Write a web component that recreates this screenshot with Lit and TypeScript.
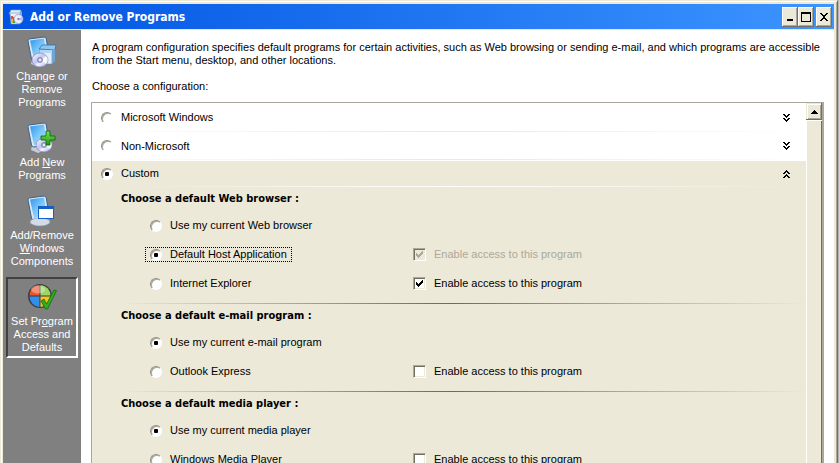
import { LitElement, html, css, nothing, svg } from "lit";
import { customElement, property, state } from "lit/decorators.js";
import { classMap } from "lit/directives/class-map.js";

type Option = { label: string; access?: "on" | "off" | "locked" };
type Group = { id: string; title: string; selected: number; options: Option[] };

const GROUPS: Group[] = [
  {
    id: "browser",
    title: "Choose a default Web browser :",
    selected: 1,
    options: [
      { label: "Use my current Web browser" },
      { label: "Default Host Application", access: "locked" },
      { label: "Internet Explorer", access: "on" },
    ],
  },
  {
    id: "email",
    title: "Choose a default e-mail program :",
    selected: 0,
    options: [{ label: "Use my current e-mail program" }, { label: "Outlook Express", access: "off" }],
  },
  {
    id: "media",
    title: "Choose a default media player :",
    selected: 0,
    options: [{ label: "Use my current media player" }, { label: "Windows Media Player", access: "off" }],
  },
];

const gradients = svg`
  <defs>
    <linearGradient id="screen" x1="0" y1="0" x2="1" y2="1">
      <stop offset="0" stop-color="#2f95ea" /><stop offset=".5" stop-color="#7cc8fa" /><stop offset="1" stop-color="#b9e4fd" />
    </linearGradient>
    <linearGradient id="disc" x1="0" y1="0" x2="1" y2="1">
      <stop offset="0" stop-color="#ffffff" /><stop offset=".45" stop-color="#c0c4f0" />
      <stop offset=".6" stop-color="#f4f4ff" /><stop offset="1" stop-color="#9fa4d8" />
    </linearGradient>
    <linearGradient id="plus" x1="0" y1="0" x2="0" y2="1">
      <stop offset="0" stop-color="#7fe05a" /><stop offset="1" stop-color="#1c9a12" />
    </linearGradient>
  </defs>`;

const monitor = svg`
  <path d="M6 24 L19 21 L24 26 L12 31 L5 28 Z" fill="#c3ccd8" />
  <path d="M3 3 L18 1 Q20 1 20.300 3 L23 20 Q23 22 21 22.500 L8 25 Q6 25 5.500 23 L2 5 Q2 3.500 3 3 Z" fill="#dbe9f6" stroke="#3f6188" stroke-width="1" />
  <path d="M4 4.500 L18 2.500 L21 20 L8 23 Z" fill="url(#screen)" />`;

const disc = (x: number, y: number) => svg`
  <ellipse cx=${x} cy=${y} rx="8" ry="7" fill="url(#disc)" stroke="#8085b5" stroke-width=".7" />
  <path d="M${x} ${y} L${x + 7} ${y - 3} A8 7 0 0 1 ${x + 6} ${y + 4} Z" fill="#fff" opacity=".7" />
  <circle cx=${x} cy=${y} r="2.600" fill="#a9addc" stroke="#6b70a4" stroke-width=".6" />
  <circle cx=${x} cy=${y} r="1" fill="#fff" />`;

const box = svg`
  <path d="M13 13 L16 9 L30 9 L29 14 Z" fill="#8cc8f4" stroke="#2f6ea8" stroke-width=".8" />
  <path d="M14 14 L26 14 L26 28 L14 28 Z" fill="#e2eefa" stroke="#5e86b0" stroke-width=".6" />
  <path d="M26 14 L29 12 L29 25 L26 28 Z" fill="#6fa4d6" />
  <path d="M14 14 L26 14 L26 17 L14 17 Z" fill="#b5d6f2" />`;

const icon = (body: unknown) => html`<svg class="icon" viewBox="0 0 32 32" aria-hidden="true">${gradients}${body}</svg>`;

const changeIcon = icon(svg`${monitor}${box}${disc(14, 24)}`);
const addIcon = icon(svg`${monitor}${disc(18, 23)}
  <path d="M20 9 h4 v5 h5 v4 h-5 v5 h-4 v-5 h-5 v-4 h5 Z" fill="url(#plus)" stroke="#0d6e0a" stroke-width=".9" />`);
const componentsIcon = icon(svg`${monitor}
  <ellipse cx="14" cy="27" rx="10" ry="4" fill="#d3dbe6" stroke="#8695a8" stroke-width=".6" />
  <rect x="12.500" y="11.500" width="15" height="12" fill="#fff" stroke="#1460c8" />
  <rect x="12" y="11" width="16" height="3" fill="#1460c8" />`);
const defaultsIcon = icon(svg`
  <circle cx="14" cy="15" r="12" fill="#3b3b3b" />
  <path d="M13.500 14.500 V4 A10.500 10.500 0 0 0 3.500 14.500 Z" fill="#f0532b" />
  <path d="M14.500 14.500 V4 A10.500 10.500 0 0 1 24.500 14.500 Z" fill="#9bd667" />
  <path d="M13.500 15.500 V26 A10.500 10.500 0 0 1 3.500 15.500 Z" fill="#2f8fee" />
  <path d="M14.500 15.500 V26 A10.500 10.500 0 0 0 24.500 15.500 Z" fill="#f7c51c" />
  <ellipse cx="12" cy="8.500" rx="7" ry="4" fill="#fff" opacity=".35" />
  <path d="M15 20 L18 18 L20.500 23 L28 9 L30.500 9.500 L21.500 28 L19.500 28 Z" fill="#32ad22" stroke="#0c6b0c" stroke-width=".8" />`);

const appIcon = html`<svg class="app-icon" viewBox="0 0 16 16" aria-hidden="true">
  <path d="M1 5 L3 1 L13 1 L12 5 Z" fill="#dce9f6" stroke="#7fa3cc" stroke-width=".6" />
  <path d="M2 4 H12 V15 H3 Z" fill="#e9f0f8" stroke="#6f93bd" stroke-width=".6" />
  <path d="M12 4 L14 2 V12 L12 14 Z" fill="#86a9cf" />
  <rect x="3" y="7" width="2" height="3" fill="#e2522a" /><rect x="3" y="10" width="2" height="4" fill="#eab829" />
  <rect x="5" y="8" width="2" height="6" fill="#37a43c" />
  <circle cx="10.500" cy="10" r="4.500" fill="#eeeffc" stroke="#8a90c4" stroke-width=".7" />
  <path d="M10.500 10 L14 8 A4 4 0 0 1 14 12 Z" fill="#b9bdec" />
  <circle cx="10.500" cy="10" r="1.300" fill="#8a8fc0" />
</svg>`;

@customElement("double-chevron")
export class DoubleChevron extends LitElement {
  @property({ type: Boolean }) up = false;
  static styles = css`
    :host { display: block; width: 7px; height: 8px; }
    .glyph { display: block; }
    .up { transform: scaleY(-1); }
  `;
  render() {
    const v = (y: number) => `M0 ${y}h2v1h1v1h1v-1h1v-1h2v1h-1v1h-1v1h-1v1h-1v-1h-1v-1h-1v-1h-1z`;
    return html`<svg class=${classMap({ glyph: true, up: this.up })} width="7" height="8" viewBox="0 0 7 8" shape-rendering="crispEdges">
      <path d="${v(0)}${v(4)}" />
    </svg>`;
  }
}

@customElement("app-root")
export class AppRoot extends LitElement {
  @state() private config = "custom";

  static styles = css`
    :host {
      display: block;
      height: 100vh;
      overflow: hidden;
      background: #b4b4b8;
      padding-right: 1px;
      box-sizing: border-box;
      font: 11px/13px "Liberation Sans", Arial, sans-serif;
      color: #000;
      --face: #ece9d8;
      --shade: #aca899;
      --dark: #716f64;
    }
    * { box-sizing: border-box; }
    button { font: inherit; color: inherit; margin: 0; padding: 0; border: 0; border-radius: 0; }
    .window {
      display: flex;
      flex-direction: column;
      height: 100%;
      padding: 3px 3px 0 2px;
      background: var(--face);
      border: solid var(--face);
      border-width: 1px 1px 0 1px;
      border-right-color: var(--dark);
      box-shadow: inset 1px 1px #fff, inset -1px 0 var(--shade);
    }
    .titlebar {
      display: flex;
      align-items: center;
      flex: none;
      height: 25px;
      padding: 0 2px 0 5px;
      background: linear-gradient(90deg, #0054e3, #3d95ff);
      color: #fff;
    }
    .app-icon { width: 16px; height: 16px; margin-right: 6px; }
    .title { flex: 1; margin: 0; font: bold 12px/16px "DejaVu Sans Condensed", "DejaVu Sans", sans-serif; }
    .caption {
      display: grid;
      place-items: center;
      width: 16px;
      height: 20px;
      background: var(--face);
      color: #000;
      box-shadow: inset -1px -1px var(--dark), inset 1px 1px #fff, inset -2px -2px var(--shade);
    }
    .caption.close { margin-left: 2px; }
    .body { display: flex; flex: 1; min-height: 0; margin-top: 1px; background: #fff; }

    .sidebar {
      display: flex;
      flex-direction: column;
      flex: none;
      gap: 5px;
      width: 78px;
      padding: 2px 3px;
      background: #808080;
    }
    .task {
      display: flex;
      flex-direction: column;
      align-items: center;
      gap: 2px;
      padding: 2px 0;
      border: 2px solid transparent;
      background: none;
      color: #fff;
      white-space: nowrap;
    }
    .task.current { border-color: #404040 #fff #fff #404040; }
    .icon { width: 32px; height: 32px; }
    .mnemonic { text-decoration: underline; }

    .content { display: flex; flex-direction: column; flex: 1; min-width: 0; padding: 11px 10px 0 10px; }
    .intro, .prompt { margin: 0; padding-left: 1px; }
    .prompt { margin-top: 13px; }
    .list {
      display: flex;
      flex: 1;
      min-height: 0;
      margin-top: 9px;
      border: solid var(--shade);
      border-width: 1px 2px 0 1px;
      overflow: hidden;
    }
    .rows { flex: 1; min-width: 0; }
    .config {
      display: flex;
      align-items: center;
      height: 28px;
      padding: 0 16px 0 9px;
      background: linear-gradient(90deg, transparent, #ece9d8 50%, transparent) bottom / 100% 1px no-repeat;
    }
    .config label { display: flex; align-items: center; flex: 1; }
    .config input { margin-right: 8px; }
    .config.first { height: 29px; }
    .config.open { height: 25px; background: none; }
    .expanded { margin-top: 1px; background: var(--face); height: 100%; }
    .group {
      margin: 0;
      padding: 0 0 5px;
      border: 0;
      background: linear-gradient(90deg, transparent 4%, #2f72dc 50%, transparent) top / 100% 1px no-repeat;
    }
    .group.lead { background-image: linear-gradient(90deg, transparent 4%, #fff 50%, transparent); }
    .heading {
      margin: 0;
      padding: 6px 0 6px 29px;
      font: bold 11px/13px "DejaVu Sans Condensed", "DejaVu Sans", sans-serif;
    }
    .option {
      display: grid;
      grid-template-columns: 268px 1fr;
      align-items: center;
      height: 29px;
      padding-left: 53px;
    }
    .choice, .access { display: flex; align-items: center; }
    .choice { justify-self: start; gap: 8px; height: 15px; padding: 0 4px; border: 1px dotted transparent; }
    .choice.focused { border-color: #000; }
    .access { gap: 8px; }
    .access.locked { color: var(--shade); }

    input { appearance: none; flex: none; margin: 0; }
    input[type="radio"] {
      display: grid;
      place-items: center;
      width: 12px;
      height: 12px;
      border: 1px solid;
      border-color: #8f8c7e #fff #fff #8f8c7e;
      border-radius: 50%;
      background: #fff;
      box-shadow: inset 1px 1px #aca899;
    }
    input[type="radio"]:checked::before { content: ""; width: 4px; height: 4px; border-radius: 1px; background: #000; }
    .tick { display: grid; flex: none; width: 13px; height: 13px; }
    .tick > * { grid-area: 1 / 1; }
    input[type="checkbox"] {
      width: 13px;
      height: 13px;
      border: 1px solid;
      border-color: var(--shade) #fff #fff var(--shade);
      background: #fff;
      box-shadow: inset 1px 1px var(--dark), inset -1px -1px var(--face);
    }
    input[type="checkbox"]:disabled { background: var(--face); }
    .mark { visibility: hidden; pointer-events: none; fill: currentColor; }
    input:checked + .mark { visibility: visible; }

    .scrollbar { flex: none; width: 16px; background: var(--face); box-shadow: inset 1px 0 #fff, inset -1px 0 var(--dark); }
    .arrow {
      display: grid;
      place-items: center;
      width: 16px;
      height: 17px;
      background: var(--face);
      box-shadow: inset -1px -1px var(--dark), inset 1px 1px var(--face), inset 2px 2px #fff, inset -2px -2px var(--shade);
    }
    .thumb { height: 100%; box-shadow: inset 1px 1px #fff, inset -1px 0 var(--dark); }
  `;

  private renderConfig(id: string, label: string, cls = "") {
    const open = id === "custom";
    return html`<div class=${classMap({ config: true, open, [cls || "closed"]: true })}>
      <label>
        <input type="radio" name="config" .checked=${this.config === id} @change=${() => (this.config = id)} />
        ${label}
      </label>
      <double-chevron ?up=${open}></double-chevron>
    </div>`;
  }

  private renderAccess(access: Option["access"]) {
    if (!access) return nothing;
    const locked = access === "locked";
    return html`<label class=${classMap({ access: true, locked })}>
      <span class="tick">
        <input type="checkbox" ?checked=${access !== "off"} ?disabled=${locked} />
        <svg class="mark" width="13" height="13" viewBox="0 0 13 13" shape-rendering="crispEdges">
          <path d="M3 5h1v1h1v1h1v-1h1v-1h1v-1h1v-1h1v3h-1v1h-1v1h-1v1h-1v1h-1v-1h-1v-1h-1z" />
        </svg>
      </span>
      Enable access to this program
    </label>`;
  }

  private renderGroup(group: Group, index: number) {
    return html`<div class=${classMap({ group: true, lead: index === 0 })} role="radiogroup" aria-labelledby=${group.id}>
      <h2 class="heading" id=${group.id}>${group.title}</h2>
      ${group.options.map(
        (option, i) => html`<div class="option">
          <label class=${classMap({ choice: true, focused: index === 0 && i === group.selected })}>
            <input type="radio" name=${group.id} ?checked=${i === group.selected} />
            ${option.label}
          </label>
          ${this.renderAccess(option.access)}
        </div>`
      )}
    </div>`;
  }

  render() {
    const key = (c: string) => html`<span class="mnemonic">${c}</span>`;
    return html`<div class="window">
      <header class="titlebar">
        ${appIcon}
        <h1 class="title">Add or Remove Programs</h1>
        <button class="caption" aria-label="Minimize">
          <svg width="10" height="10" shape-rendering="crispEdges"><path d="M2 7h6v2H2z" /></svg>
        </button>
        <button class="caption" aria-label="Maximize">
          <svg width="10" height="10" shape-rendering="crispEdges"><path fill-rule="evenodd" d="M0 0h10v10H0zM1 2h8v7H1z" /></svg>
        </button>
        <button class="caption close" aria-label="Close">
          <svg width="10" height="8" shape-rendering="crispEdges">
            <path d="M1 0h2v1h1v1h2v-1h1v-1h2v1h-1v1h-1v1h-1v2h1v1h1v1h1v1h-2v-1h-1v-1h-2v1h-1v1h-2v-1h1v-1h1v-1h1v-2h-1v-1h-1v-1h-1z" />
          </svg>
        </button>
      </header>
      <div class="body">
        <nav class="sidebar">
          <button class="task">${changeIcon}<span>C${key("h")}ange or<br />Remove<br />Programs</span></button>
          <button class="task">${addIcon}<span>Add ${key("N")}ew<br />Programs</span></button>
          <button class="task">${componentsIcon}<span>Add/Remove<br />${key("W")}indows<br />Components</span></button>
          <button class="task current">${defaultsIcon}<span>Set Pr${key("o")}gram<br />Access and<br />Defaults</span></button>
        </nav>
        <main class="content">
          <p class="intro">
            A program configuration specifies default programs for certain activities, such as Web browsing or sending
            e-mail, and which programs are accessible from the Start menu, desktop, and other locations.
          </p>
          <p class="prompt">Choose a configuration:</p>
          <div class="list">
            <div class="rows">
              ${this.renderConfig("microsoft", "Microsoft Windows", "first")}
              ${this.renderConfig("other", "Non-Microsoft")}
              <div class="expanded">${this.renderConfig("custom", "Custom")} ${GROUPS.map((g, i) => this.renderGroup(g, i))}</div>
            </div>
            <div class="scrollbar">
              <button class="arrow" aria-label="Scroll up">
                <svg width="7" height="4" shape-rendering="crispEdges"><path d="M3 0h1v1h1v1h1v1h1v1H0V3h1V2h1V1h1z" /></svg>
              </button>
              <div class="thumb"></div>
            </div>
          </div>
        </main>
      </div>
    </div>`;
  }
}
